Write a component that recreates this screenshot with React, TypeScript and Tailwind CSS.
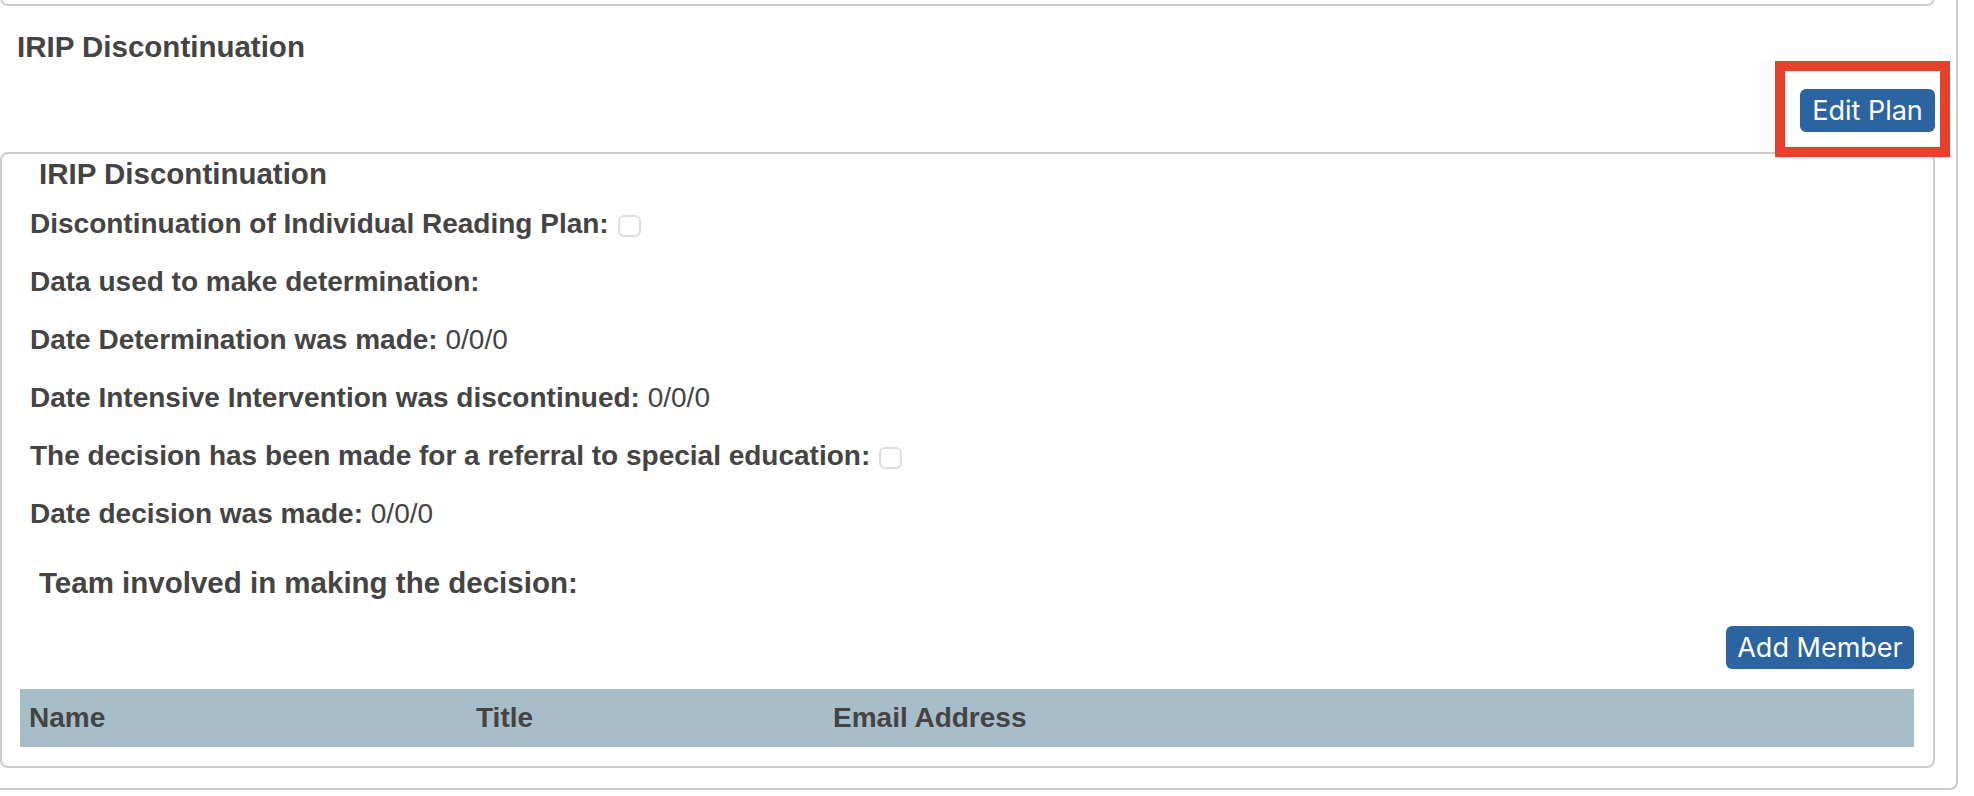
import React from 'react';

interface FieldRow {
  label: string;
  value?: string;
  checkbox?: boolean;
}

const rows: FieldRow[] = [
  { label: 'Discontinuation of Individual Reading Plan:', checkbox: true },
  { label: 'Data used to make determination:' },
  { label: 'Date Determination was made:', value: '0/0/0' },
  { label: 'Date Intensive Intervention was discontinued:', value: '0/0/0' },
  { label: 'The decision has been made for a referral to special education:', checkbox: true },
  { label: 'Date decision was made:', value: '0/0/0' },
];

const Checkbox: React.FC = () => (
  <span className="inline-block ml-[9px] w-[23px] h-[22px] rounded-[6px] border-2 border-[#dedede] bg-white translate-y-[2px]" />
);

const PlanButton: React.FC<{ label: string; width: string }> = ({ label, width }) => (
  <button
    className={`${width} h-[43px] rounded-[6px] bg-[#2b64a0] text-white text-[27px] leading-none font-['Inter',sans-serif] flex items-center justify-center`}
  >
    {label}
  </button>
);

const App: React.FC = () => {
  return (
    <div className="w-[1958px] bg-white text-[#444444] font-['Liberation_Sans',Arial,sans-serif]">
      <div className="flex flex-col pr-[21px] pb-[20px] border-r-2 border-b-2 border-[#cccccc] rounded-br-[8px]">
        {/* Previous card (bottom edge only) */}
        <div className="h-[6px] overflow-hidden flex items-end">
          <div className="h-[30px] w-full border-2 border-t-0 border-[#cccccc] rounded-b-[8px]" />
        </div>

        <h4 className="mt-[21px] pl-[17px] text-[29.5px] leading-[40px] font-bold">IRIP Discontinuation</h4>

        {/* Edit Plan */}
        <div className="mt-[22px] flex justify-end">
          <div className="relative">
            <PlanButton label="Edit Plan" width="w-[135px]" />
            <span className="pointer-events-none absolute -left-[25px] -top-[28px] -right-[15px] -bottom-[25px] border-[10px] border-[#e8412b]" />
          </div>
        </div>

        {/* IRIP Discontinuation card */}
        <div className="mt-[20px] border-2 border-[#cccccc] rounded-[8px] pl-[18px] pr-[19px] pb-[19px]">
          <h4 className="ml-[19px] text-[29.5px] leading-[40px] font-bold">IRIP Discontinuation</h4>

          <div className="mt-[10px] ml-[10px] flex flex-col">
            {rows.map((row) => (
              <div key={row.label} className="h-[58px] text-[28px] leading-[40px] flex items-start">
                <span className="font-bold">{row.label}</span>
                {row.value && <span>&nbsp;{row.value}</span>}
                {row.checkbox && (
                  <span className="h-[40px] flex items-center">
                    <Checkbox />
                  </span>
                )}
              </div>
            ))}
          </div>

          <h4 className="mt-[11px] ml-[19px] text-[29.5px] leading-[40px] font-bold">
            Team involved in making the decision:
          </h4>

          <div className="mt-[23px] flex justify-end">
            <PlanButton label="Add Member" width="w-[188px]" />
          </div>

          {/* Team table */}
          <div className="mt-[20px] grid grid-cols-[447px_357px_1fr] bg-[#a8bdca] h-[58px] text-[28px] leading-[40px] font-bold">
            <div className="pl-[9px] py-[9px]">Name</div>
            <div className="pl-[9px] py-[9px]">Title</div>
            <div className="pl-[9px] py-[9px]">Email Address</div>
          </div>
        </div>
      </div>
    </div>
  );
};

export default App;
